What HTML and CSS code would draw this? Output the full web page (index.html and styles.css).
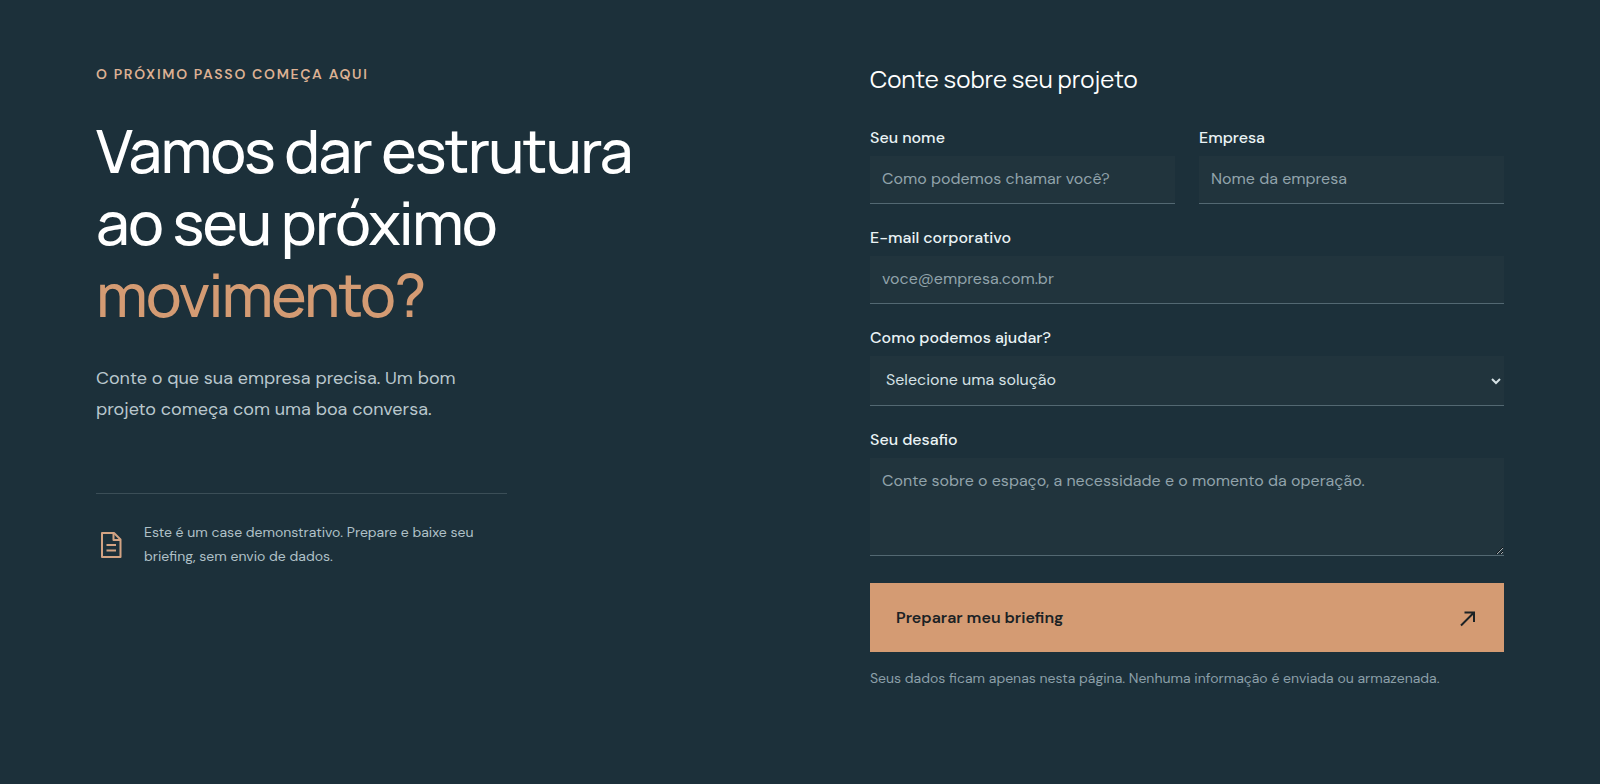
FILE: index.html
```html
<!DOCTYPE html>
<html lang="pt-BR">
<head>
    <meta charset="UTF-8">
    <meta name="viewport" content="width=device-width, initial-scale=1.0">
    <title>Contato</title>
    <link rel="stylesheet" href="styles.css">
</head>
<body>
    <section class="contact">
        <div class="contact-copy">
            <p class="eyebrow">O próximo passo começa aqui</p>
            <h1>Vamos dar estrutura<br>ao seu próximo<br><span class="accent">movimento?</span></h1>
            <p class="lead">Conte o que sua empresa precisa. Um bom projeto começa com uma boa conversa.</p>
            <div class="notice">
                <svg class="notice-icon" viewBox="0 0 28 28" fill="none" stroke="currentColor" stroke-width="2" stroke-linejoin="round" aria-hidden="true">
                    <path d="M6 3h12l6.500 6.500V27H6z"/>
                    <path d="M17.500 3v7h7M10.500 15h9.500M10.500 20.500h9.500"/>
                </svg>
                <p>Este é um case demonstrativo. Prepare e baixe seu briefing, sem envio de dados.</p>
            </div>
        </div>

        <form class="contact-form">
            <h2>Conte sobre seu projeto</h2>
            <div class="form-row">
                <div class="form-group">
                    <label for="name">Seu nome</label>
                    <input type="text" id="name" name="name" placeholder="Como podemos chamar você?">
                </div>
                <div class="form-group">
                    <label for="company">Empresa</label>
                    <input type="text" id="company" name="company" placeholder="Nome da empresa">
                </div>
            </div>
            <div class="form-group">
                <label for="email">E-mail corporativo</label>
                <input type="email" id="email" name="email" placeholder="voce@empresa.com.br">
            </div>
            <div class="form-group">
                <label for="solution">Como podemos ajudar?</label>
                <select id="solution" name="solution">
                    <option value="">Selecione uma solução</option>
                </select>
            </div>
            <div class="form-group">
                <label for="challenge">Seu desafio</label>
                <textarea id="challenge" name="challenge" placeholder="Conte sobre o espaço, a necessidade e o momento da operação."></textarea>
            </div>
            <button type="submit">
                <span>Preparar meu briefing</span>
                <svg class="arrow" viewBox="0 0 20 20" fill="none" stroke="currentColor" stroke-width="2" aria-hidden="true">
                    <path d="M3 17.500L16 4.500M6.500 4.500H16V14"/>
                </svg>
            </button>
            <p class="form-note">Seus dados ficam apenas nesta página. Nenhuma informação é enviada ou armazenada.</p>
        </form>
    </section>
</body>
</html>
```

FILE: styles.css
```css
:root {
    --bg: #1c303a;
    --field: #21343d;
    --accent: #d49b73;
    --line: #536872;
    --heading: "Manrope", "Inter", sans-serif;
    --body: "DM Sans", "Inter", sans-serif;
}

* {
    box-sizing: border-box;
}

body {
    margin: 0;
    min-height: 100vh;
    background: var(--bg);
    color: #fff;
    font-family: var(--body);
    font-size: 16px;
}

h1, h2, p {
    margin: 0;
}

.contact {
    display: grid;
    grid-template-columns: 1fr 1fr;
    gap: 140px;
    padding: 64px 6%;
}

.eyebrow {
    color: #ddb193;
    font-size: 14px;
    font-weight: 600;
    line-height: 20px;
    letter-spacing: 0.12em;
    text-transform: uppercase;
}

h1 {
    margin-top: 30px;
    font-family: var(--heading);
    font-size: 60px;
    font-weight: 500;
    line-height: 72px;
    letter-spacing: -0.03em;
    white-space: nowrap;
}

.accent {
    color: var(--accent);
}

.lead {
    max-width: 380px;
    margin-top: 33px;
    color: #b9c7cd;
    font-size: 18px;
    line-height: 31px;
}

.notice {
    display: flex;
    align-items: center;
    gap: 20px;
    max-width: 411px;
    margin-top: 68px;
    padding-top: 26px;
    border-top: 1px solid #3b4e57;
    color: #b0c1c8;
    font-size: 14px;
    line-height: 24px;
}

.notice-icon {
    flex: none;
    width: 28px;
    height: 28px;
    color: #d3a383;
}

.notice p {
    max-width: 340px;
}

.contact-form h2 {
    margin-bottom: 30px;
    font-family: var(--heading);
    font-size: 24px;
    font-weight: 400;
    line-height: 30px;
}

.form-row {
    display: grid;
    grid-template-columns: 1fr 1fr;
    gap: 24px;
}

.form-group {
    display: flex;
    flex-direction: column;
    gap: 4px;
    margin-bottom: 20px;
}

label {
    color: #eaf3f5;
    font-size: 16px;
    font-weight: 500;
    line-height: 28px;
}

input, select, textarea {
    width: 100%;
    height: 48px;
    padding: 0 12px 2px;
    border: 0;
    border-bottom: 1px solid var(--line);
    border-radius: 0;
    background: var(--field);
    color: #d5e1e5;
    font-family: inherit;
    font-size: 16px;
}

select {
    height: 50px;
}

textarea {
    height: 98px;
    padding: 12px;
    line-height: 22px;
    resize: vertical;
}

::placeholder {
    color: #91a3ab;
    opacity: 1;
}

button {
    display: flex;
    align-items: center;
    justify-content: space-between;
    width: 100%;
    height: 69px;
    margin-top: 27px;
    padding: 0 26px;
    border: 0;
    background: var(--accent);
    color: #1b2225;
    font-family: inherit;
    font-size: 16px;
    font-weight: 600;
    cursor: pointer;
}

.arrow {
    width: 20px;
    height: 20px;
}

.form-note {
    margin-top: 15px;
    color: #8b9fa8;
    font-size: 14px;
    line-height: 22px;
}
```
